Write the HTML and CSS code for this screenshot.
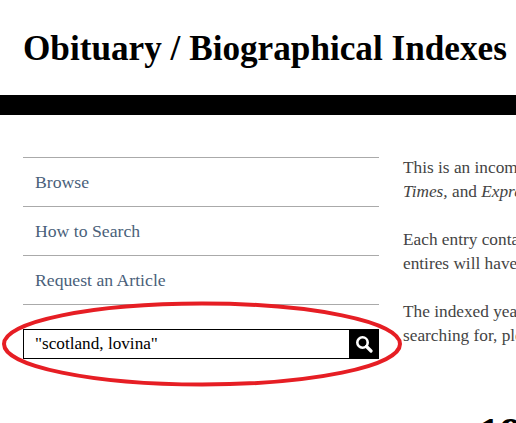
FILE: index.html
```html
<!DOCTYPE html>
<html lang="en">
<head>
  <meta charset="UTF-8">
  <title>Obituary / Biographical Indexes</title>
  <link rel="stylesheet" href="styles.css">
</head>
<body>

  <h1 class="page-title">Obituary / Biographical Indexes</h1>
  <div class="black-bar"></div>

  <div class="main">
    <!-- Left column -->
    <div class="sidebar">
      <ul class="side-nav">
        <li><a href="#">Browse</a></li>
        <li><a href="#">How to Search</a></li>
        <li><a href="#">Request an Article</a></li>
      </ul>
      <form class="search-box">
        <input class="search-input" type="text" value="&quot;scotland, lovina&quot;">
        <button class="search-btn" type="button">
          <svg width="18" height="18" viewBox="0 0 18 18">
            <circle cx="7.500" cy="7.500" r="5.200" fill="none" stroke="white" stroke-width="2.600"/>
            <path d="M11.500 11.500 L16 16" stroke="white" stroke-width="3.200" stroke-linecap="round"/>
          </svg>
        </button>
      </form>
    </div>

    <!-- Right column -->
    <div class="content">
      <p>This is an incomplete index of the<br><i>Times,</i> and <i>Express</i> newspapers.</p>
      <p>Each entry contains a name and date;<br>entires will have a page number too.</p>
      <p>The indexed years are below. If you are<br>searching for, please ask us for help.</p>
      <h2 class="years">1900</h2>
    </div>
  </div>

  <!-- Red hand-drawn circle over the search box -->
  <svg class="red-circle" width="410" height="90" viewBox="0 0 410 90">
    <ellipse cx="202" cy="44" rx="198" ry="40.500" fill="none" stroke="#e61e24" stroke-width="4"/>
  </svg>

</body>
</html>
```

FILE: styles.css
```css
html, body {
  height: 423px;
  overflow: hidden;
}

body {
  margin: 0;
  background-color: white;
  font-family: "Liberation Serif", serif;
  color: #444;
  position: relative;
}

.page-title {
  margin: 0;
  padding: 29px 0 0 23px;
  height: 95px;
  box-sizing: border-box;
  font-size: 35.200px;
  line-height: 40px;
  color: black;
  white-space: nowrap;
}

.black-bar {
  height: 20px;
  background-color: black;
}

.main {
  display: flex;
  gap: 24px;
  padding: 42px 0 0 23px;
}

.sidebar {
  width: 356px;
  flex-shrink: 0;
}

.side-nav {
  list-style: none;
  margin: 0;
  padding: 0;
  border-top: 1px solid #aaa;
}

.side-nav li {
  height: 48px;
  border-bottom: 1px solid #aaa;
  display: flex;
  align-items: center;
  padding-left: 12px;
}

.side-nav a {
  color: #4a5f7a;
  text-decoration: none;
  font-size: 17.700px;
}

.search-box {
  display: flex;
  height: 30px;
  margin-top: 24px;
  border: 1px solid black;
  box-sizing: border-box;
}

.search-input {
  flex: 1;
  min-width: 0;
  border: none;
  outline: none;
  padding: 0 0 0 11px;
  font-family: "Liberation Serif", serif;
  font-size: 17.200px;
  color: black;
}

.search-btn {
  width: 29px;
  border: none;
  padding: 0;
  background-color: black;
  display: flex;
  align-items: center;
  justify-content: center;
}

.content {
  width: 500px;
  flex-shrink: 0;
  font-size: 17.300px;
  line-height: 24px;
  white-space: nowrap;
  margin-top: -1px;
}

.content p {
  margin: 0 0 24px 0;
}

.years {
  margin: 0;
  padding: 38px 0 0 75px;
  font-size: 44px;
  line-height: 48px;
  color: black;
}

.red-circle {
  position: absolute;
  left: 0;
  top: 300px;
}
```
